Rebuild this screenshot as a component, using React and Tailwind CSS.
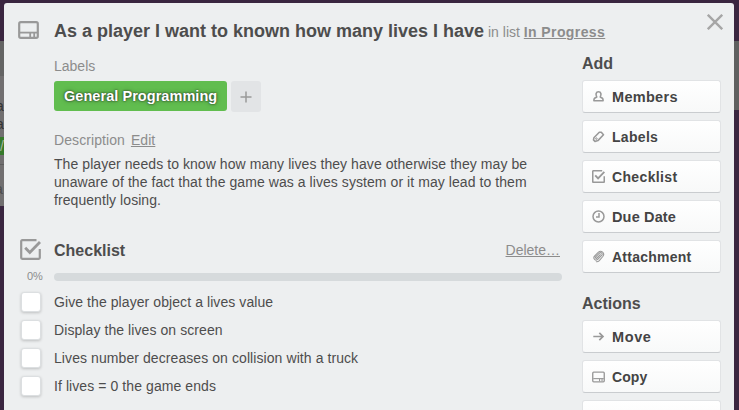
import React from "react";

const CardIcon = ({ className, w = 2.2 }) => (
  <svg viewBox="0 0 21 18" className={className} fill="none" stroke="#999" strokeWidth={w}>
    <rect x="1.200" y="1.200" width="18.600" height="15.600" rx="1.600" />
    <path d="M2 11.600h17" strokeWidth="1.800" />
    <path d="M12.200 12v4M16.200 12v4" strokeWidth="1.800" />
  </svg>
);

const CheckIcon = ({ className, w = 2.2 }) => (
  <svg viewBox="0 0 21 21" className={className} fill="none" stroke="#999" strokeWidth={w}>
    <path d="M16.5 1.2H2.200a1 1 0 0 0-1 1v16.600a1 1 0 0 0 1 1h16.600a1 1 0 0 0 1-1V10" />
    <path d="M5.200 8.800l4.600 4.700L20 3" strokeWidth={w + 0.6} />
  </svg>
);

const s = { fill: "none", stroke: "#999", strokeWidth: 1.5 };
const icons = {
  Members: (
    <svg viewBox="0 0 13 13" className="size-[13px]" {...s} strokeWidth="1.600" strokeLinejoin="round">
      <path d="M4.900 7C3.300 4.800 3.900 1.700 6.500 1.700S9.700 4.800 8.100 7" />
      <path d="M5.200 6.800L2.600 8.200C2 8.700 1.900 9.500 1.900 10.800h9.200c0-1.300-.1-2.100-.7-2.600L7.800 6.800" />
    </svg>
  ),
  Labels: (
    <svg viewBox="0 0 13 13" className="size-[13px]" {...s} strokeWidth="1.600" strokeLinejoin="round">
      <path d="M1.900 7.800L7.300 2.200l2 .1 2.200 2.500-5.600 5.800-2.900.8-1.500-1.500z" />
      <circle cx="4.400" cy="8.600" r=".8" strokeWidth="1" />
    </svg>
  ),
  Checklist: <CheckIcon className="size-[13px]" w={2.5} />,
  "Due Date": (
    <svg viewBox="0 0 13 13" className="size-[13px]" {...s}>
      <circle cx="6.500" cy="6.500" r="5.500" />
      <path d="M7 3v4H4" />
    </svg>
  ),
  Attachment: (
    <svg viewBox="0 0 13 13" className="size-[13px]" {...s} strokeWidth="1.100" strokeLinecap="round">
      <path d="M8.300 4.600L5 8c-.9.900-2.100-.2-1.200-1.200l3.400-3.500C9 1.600 11.200 3.700 9.600 5.500L6 9.200C3.600 11.500.4 8.400 2.700 6l3.500-3.600c3-2.800 7.200.8 4.600 4.100L7.300 10.600c-.9 1-1.900 1.300-3 1.200" />
    </svg>
  ),
  Move: (
    <svg viewBox="0 0 13 13" className="size-[13px]" {...s} strokeWidth="1.700">
      <path d="M1.300 6.500h9.400M7.300 2.800L11 6.500l-3.700 3.700" />
    </svg>
  ),
  Copy: <CardIcon className="h-[12px] w-[13px]" w={2.2} />,
};

const labelType = {
  Members: "text-[14.5px] tracking-[0.3px]",
  Labels: "text-[14px] tracking-[0.3px]",
  Checklist: "text-[14px] tracking-[0.35px]",
  "Due Date": "text-[14.5px] tracking-[0.15px]",
  Attachment: "text-[14px] tracking-[0.25px]",
  Move: "text-[14.5px] tracking-[0.6px]",
  Copy: "text-[14px] tracking-[0.1px]",
};

function SideButton({ label }) {
  return (
    <div className="mb-[7px] flex h-[33px] w-[139px] shrink-0 items-center rounded-[3px] border border-[#e1e3e5] border-b-[#c9cccf] bg-linear-to-b from-white to-[#f8f9f9] pl-[9px] font-bold text-[#444]">
      <span className="flex w-[13px] justify-center">{icons[label]}</span>
      <span className={"ml-[7px] whitespace-nowrap " + (labelType[label] || "")}>{label}</span>
    </div>
  );
}

const items = [
  "Give the player object a lives value",
  "Display the lives on screen",
  "Lives number decreases on collision with a truck",
  "If lives = 0 the game ends",
];

export default function App() {
  return (
    <div className="flex h-[410px] w-[739px] overflow-hidden bg-[#3a2640] font-['Liberation_Sans',Arial,sans-serif] text-[14px] leading-[18px] text-[#4d4d4d]">
      <div className="w-1 shrink-0 overflow-hidden pt-[41px]">
        <div className="h-[35px] bg-[#646464]" />
        <div className="flex h-[130px] flex-col bg-[#716f70] text-[#333]">
          <span className="-ml-[4px] mt-[21px] h-[18px]">a</span>
          <span className="-ml-[4px] h-[18px]">a</span>
          <span className="mt-[4px] h-[18px] shrink-0 bg-[#367a2b] text-[#a5b5a0]">/</span>
          <span className="h-[10px] shrink-0 border-b border-[#5d5d5d]" />
          <span className="-ml-[5px] mt-[15px] text-[#4b4b4b]">a</span>
        </div>
      </div>
      <main className="mt-[3px] flex w-[730px] shrink-0 rounded-t-[3px] bg-[#edeff0]">
        <section className="w-[558px] shrink-0 pl-[14px]">
          <header className="flex h-[52px] items-start pt-[18px]">
            <CardIcon className="h-[18px] w-[21px] shrink-0" />
            <div className="ml-[15px] flex items-baseline whitespace-nowrap leading-[21px]">
              <h1 className="w-[434px] text-[18px] font-bold">As a player I want to known how many lives I have</h1>
              <span className="text-[#8c8c8c]">in list <b className="tracking-[0.4px] underline">In Progress</b></span>
            </div>
          </header>
          <div className="ml-9 pt-[2px]">
            <h3 className="text-[#8c8c8c]">Labels</h3>
            <div className="mt-[6px] flex gap-1">
              <span className="flex h-[30px] w-[173px] items-center rounded-[3px] bg-[#61bd4f] pl-[10px] text-[14.5px] font-bold tracking-[0.05px] text-white [text-shadow:0_0_5px_rgba(0,0,0,.35),0_0_2px_#222]">General Programming</span>
              <span className="flex h-[31px] w-[30px] items-center justify-center rounded-[3px] bg-[#e2e4e6]">
                <svg viewBox="0 0 12 12" className="size-3" stroke="#999" strokeWidth="1.500"><path d="M.5 6h11M6 .5v11" /></svg>
              </span>
            </div>
            <h3 className="mt-[19px] tracking-[0.08px] text-[#8c8c8c]">Description <span className="ml-[2px] underline">Edit</span></h3>
            <p className="mt-[6px] w-[500px] tracking-[0.066px]">The player needs to know how many lives they have otherwise they may be<br />unaware of the fact that the game was a lives system or it may lead to them<br />frequently losing.</p>
          </div>
          <div className="mt-[29px] flex h-[24px] items-center pl-[2px]">
            <CheckIcon className="-mt-[2px] size-[21px]" />
            <h2 className="ml-[13px] flex-1 pt-[2px] text-[16px] font-bold">Checklist</h2>
            <span className="mr-[2px] text-[#8c8c8c] underline">Delete…</span>
          </div>
          <div className="mt-[5px] flex h-[18px] items-center">
            <span className="w-9 pl-[9px] text-[11px] text-[#8c8c8c]">0%</span>
            <span className="mt-px h-2 flex-1 rounded-full bg-[#d6dadc]" />
          </div>
          <div className="mt-[7px] flex flex-col gap-2 pl-[3px] tracking-[0.08px]">
            {items.map((t) => (
              <div key={t} className="flex h-5 items-center">
                <span className="size-5 rounded-[3px] border border-[#dcdfe1] bg-white shadow-[0_1px_3px_rgba(0,0,0,.2)]" />
                <span className="ml-[13px]">{t}</span>
              </div>
            ))}
          </div>
        </section>
        <aside className="flex h-[407px] flex-col overflow-hidden pl-5">
          <div className="flex h-[51px] w-[141px] shrink-0 justify-end pt-[11px]">
            <svg viewBox="0 0 16 16" className="size-4" stroke="#a6a6a6" strokeWidth="2.400"><path d="M.8.8l14.400 14.400M15.200.8L.8 15.200" /></svg>
          </div>
          <h2 className="mb-[6px] h-[20px] shrink-0 text-[16px] font-bold leading-[20px]">Add</h2>
          {["Members", "Labels", "Checklist", "Due Date", "Attachment"].map((l) => <SideButton key={l} label={l} />)}
          <h2 className="mb-[6px] mt-[14px] h-[20px] shrink-0 text-[16px] font-bold leading-[20px]">Actions</h2>
          {["Move", "Copy", ""].map((l) => <SideButton key={l} label={l} />)}
        </aside>
      </main>
      <div className="mt-[41px] h-[69px] w-[5px] shrink-0 bg-[#5f6060]" />
    </div>
  );
}
